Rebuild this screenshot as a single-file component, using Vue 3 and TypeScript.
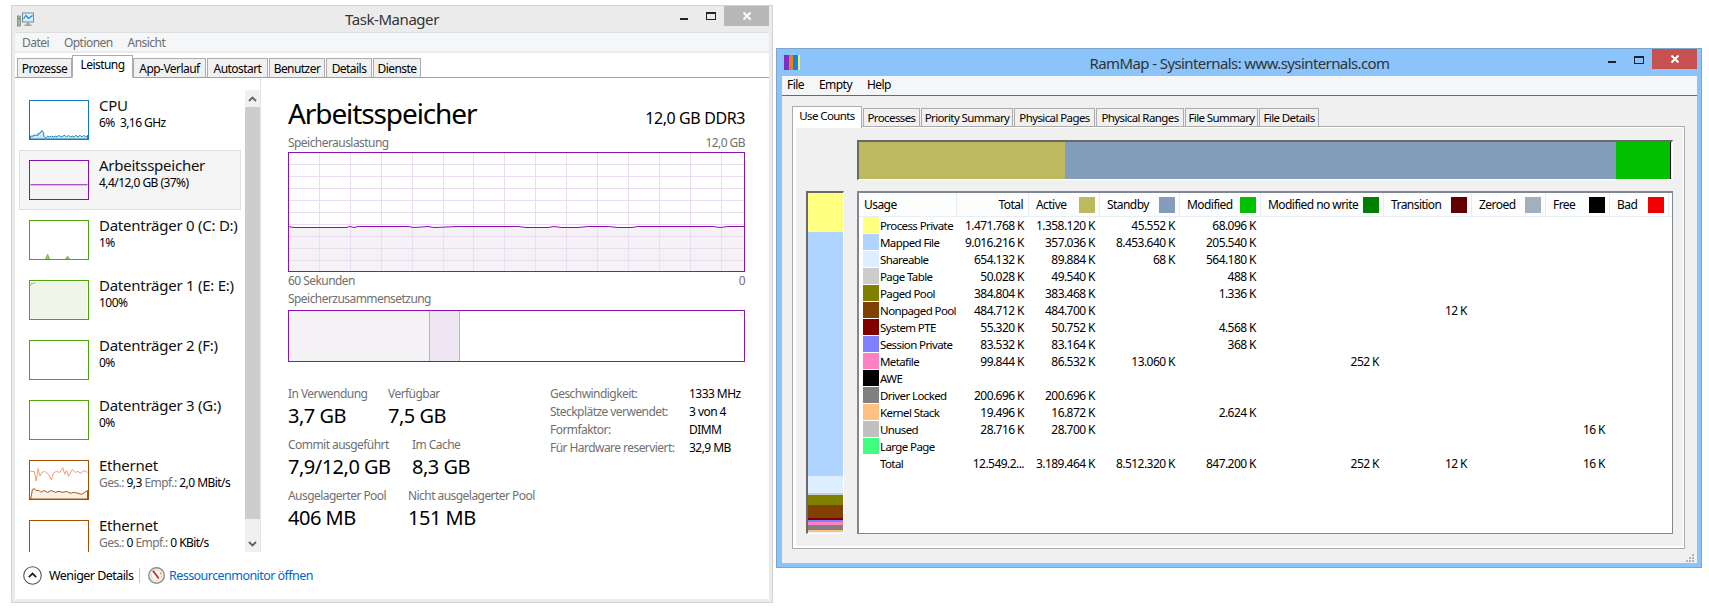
<script setup lang="ts">
type Shape = { d: string, fill?: string, stroke?: string }
type Perf = { title: string, sub: { t: string, muted?: boolean }[], color: string, shapes: Shape[] }

const tmMenu = ['Datei', 'Optionen', 'Ansicht']
const tmTabs = [
  { label: 'Prozesse', w: 55 },
  { label: 'Leistung', w: 61, active: true },
  { label: 'App-Verlauf', w: 73 },
  { label: 'Autostart', w: 61 },
  { label: 'Benutzer', w: 56 },
  { label: 'Details', w: 46 },
  { label: 'Dienste', w: 48 }
]

const perf: Perf[] = [
  {
    title: 'CPU',
    sub: [{ t: '6%  3,16 GHz' }],
    color: '#117dbb',
    shapes: [{
      d: 'M0 40V37H3V36H8V34H10L12 31L14 34V37L16 39L18 37L20 38L22 37L24 38L26 37L28 38L30 36L32 38L34 37L36 36L38 38L40 36L42 38L44 37L46 38L48 36L50 38L52 36L54 38L56 36L58 38L60 36V40Z',
      fill: '#d3e6f1',
      stroke: '#117dbb'
    }]
  },
  {
    title: 'Arbeitsspeicher',
    sub: [{ t: '4,4/12,0 GB (37%)' }],
    color: '#8b12ae',
    shapes: [{ d: 'M0 25H60V40H0Z', fill: '#f4f2f4' }, { d: 'M0 25H60', stroke: '#8b12ae' }]
  },
  {
    title: 'Datenträger 0 (C: D:)',
    sub: [{ t: '1%' }],
    color: '#4da60c',
    shapes: [{ d: 'M16 40L18 35L20 40ZM37 40L39 37L41 40Z', fill: '#a5d284', stroke: '#6db53a' }]
  },
  {
    title: 'Datenträger 1 (E: E:)',
    sub: [{ t: '100%' }],
    color: '#4da60c',
    shapes: [{ d: 'M0 5L1 2L3 3L5 1H60V40H0Z', fill: '#eff6e8' }, { d: 'M0 5L1 2L3 3L5 1', stroke: '#7dbd4e' }]
  },
  { title: 'Datenträger 2 (F:)', sub: [{ t: '0%' }], color: '#4da60c', shapes: [] },
  { title: 'Datenträger 3 (G:)', sub: [{ t: '0%' }], color: '#4da60c', shapes: [] },
  {
    title: 'Ethernet',
    sub: [{ t: 'Ges.: ', muted: true }, { t: '9,3 ' }, { t: 'Empf.: ', muted: true }, { t: '2,0 MBit/s' }],
    color: '#a74f01',
    shapes: [
      { d: 'M1 36L2 30L4 29L6 31H9L11 33L14 31L18 33L22 31L26 33L30 32L34 33L38 32L42 34L46 33L50 34L54 35L57 33L60 31V40H0Z', fill: '#fcf1e8', stroke: '#a74f01' },
      { d: 'M0 11H4L6 21L8 8L10 16L12 12L15 11L19 14L22 20L24 13L27 11L31 12L34 7L36 14L38 10L40 16L44 9L47 12L50 11L53 13L56 10L60 12', stroke: '#ee9a6c' }
    ]
  },
  {
    title: 'Ethernet',
    sub: [{ t: 'Ges.: ', muted: true }, { t: '0 ' }, { t: 'Empf.: ', muted: true }, { t: '0 KBit/s' }],
    color: '#a74f01',
    shapes: []
  }
]

const gridX = [31, 62, 93, 124, 155, 185, 216, 247, 278, 309, 340, 371, 402, 433]
const gridY = [12, 24, 36, 48, 60, 72, 84, 96, 108]
const memLine = 'M0 74.5L6 75.5H58L62 74.5L66 75.5L70 74.5L76 74.5L120 74.5L126 75.5L140 74.5L146 75.5L170 74.5H230L238 75.5H260L266 74.5L274 75.5H290L300 74.5H320L330 75.5H344L350 74.5H425L432 75.5L440 74.5H457'

const statRows = [
  { w: 100, items: [{ label: 'In Verwendung', value: '3,7 GB' }, { label: 'Verfügbar', value: '7,5 GB' }] },
  { w: 124, items: [{ label: 'Commit ausgeführt', value: '7,9/12,0 GB' }, { label: 'Im Cache', value: '8,3 GB' }] },
  { w: 120, items: [{ label: 'Ausgelagerter Pool', value: '406 MB' }, { label: 'Nicht ausgelagerter Pool', value: '151 MB' }] }
]
const specs = [
  ['Geschwindigkeit:', '1333 MHz'],
  ['Steckplätze verwendet:', '3 von 4'],
  ['Formfaktor:', 'DIMM'],
  ['Für Hardware reserviert:', '32,9 MB']
]

const rmMenu = ['File', 'Empty', 'Help']
const rmTabs = [
  { label: 'Processes', w: 57 },
  { label: 'Priority Summary', w: 92 },
  { label: 'Physical Pages', w: 81 },
  { label: 'Physical Ranges', w: 88 },
  { label: 'File Summary', w: 73 },
  { label: 'File Details', w: 60 }
]
const pageBar = [
  { c: '#bdb95e', w: 206 },
  { c: '#839eba', w: 551 },
  { c: '#00c000', w: 54 },
  { c: '#000000', w: 1 }
]
const usageStack = [
  { c: '#ffff80', h: 39 },
  { c: '#aed4ff', h: 244 },
  { c: '#ddeeff', h: 17 },
  { c: '#cccccc', h: 2 },
  { c: '#808000', h: 10 },
  { c: '#804000', h: 13 },
  { c: '#800000', h: 2 },
  { c: '#8080ff', h: 2 },
  { c: '#ff80c0', h: 3 },
  { c: '#808080', h: 5 },
  { c: '#ffc080', h: 2 }
]
const headers = [
  { label: 'Active', c: '#bdb95e' },
  { label: 'Standby', c: '#839eba' },
  { label: 'Modified', c: '#00c000' },
  { label: 'Modified no write', c: '#008000' },
  { label: 'Transition', c: '#600000' },
  { label: 'Zeroed', c: '#a3afbc' },
  { label: 'Free', c: '#000000' },
  { label: 'Bad', c: '#f00000' }
]
const usage = [
  { name: 'Process Private', c: '#ffff80', v: ['1.471.768 K', '1.358.120 K', '45.552 K', '68.096 K'] },
  { name: 'Mapped File', c: '#aed4ff', v: ['9.016.216 K', '357.036 K', '8.453.640 K', '205.540 K'] },
  { name: 'Shareable', c: '#ddeeff', v: ['654.132 K', '89.884 K', '68 K', '564.180 K'] },
  { name: 'Page Table', c: '#cccccc', v: ['50.028 K', '49.540 K', '', '488 K'] },
  { name: 'Paged Pool', c: '#808000', v: ['384.804 K', '383.468 K', '', '1.336 K'] },
  { name: 'Nonpaged Pool', c: '#804000', v: ['484.712 K', '484.700 K', '', '', '', '12 K'] },
  { name: 'System PTE', c: '#800000', v: ['55.320 K', '50.752 K', '', '4.568 K'] },
  { name: 'Session Private', c: '#8080ff', v: ['83.532 K', '83.164 K', '', '368 K'] },
  { name: 'Metafile', c: '#ff80c0', v: ['99.844 K', '86.532 K', '13.060 K', '', '252 K'] },
  { name: 'AWE', c: '#000000', v: [] },
  { name: 'Driver Locked', c: '#808080', v: ['200.696 K', '200.696 K'] },
  { name: 'Kernel Stack', c: '#ffc080', v: ['19.496 K', '16.872 K', '', '2.624 K'] },
  { name: 'Unused', c: '#c0c0c0', v: ['28.716 K', '28.700 K', '', '', '', '', '', '16 K'] },
  { name: 'Large Page', c: '#40ff80', v: [] },
  { name: 'Total', c: 'transparent', v: ['12.549.2...', '3.189.464 K', '8.512.320 K', '847.200 K', '252 K', '12 K', '', '16 K'] }
]
</script>

<template>
  <div class="desktop">
    <!-- Task-Manager -->
    <section class="win tm">
      <header class="titlebar">
        <svg class="tm-icon" width="17" height="15" viewBox="0 0 17 15">
          <rect x="0.5" y="4" width="3" height="10" fill="#a9b5a8" stroke="#6f7f70" stroke-width="0.7" />
          <rect x="1" y="6" width="2" height="1.5" fill="#46b046" />
          <rect x="5.5" y="1" width="11" height="9" fill="#d5ecfa" stroke="#7d8c99" />
          <path d="M6.5 7L9 3.5L11.5 6.5L15.5 3.5" fill="none" stroke="#2a86cf" stroke-width="1.2" />
          <path d="M9.5 10.5H12.5V12.5H14.5V14H7.5V12.5H9.5Z" fill="#9aa5ad" />
        </svg>
        <span class="title">Task-Manager</span>
        <span class="caption">
          <i class="min"></i>
          <i class="max"></i>
          <b class="close close-idle">
            <svg width="10" height="10" viewBox="0 0 10 10"><path d="M1.5 1.5L8.5 8.5M8.5 1.5L1.5 8.5" stroke="#fff" stroke-width="2" /></svg>
          </b>
        </span>
      </header>
      <nav class="tm-menu"><span v-for="m in tmMenu" :key="m">{{ m }}</span></nav>
      <div class="client">
        <div class="tm-tabs">
          <span
            v-for="t in tmTabs"
            :key="t.label"
            class="tm-tab"
            :class="{ active: t.active }"
            :style="{ width: t.w + 'px' }"
          >{{ t.label }}</span>
        </div>

        <div class="tm-body">
          <aside class="side">
            <div class="side-list">
              <div v-for="(p, i) in perf" :key="i" class="perf" :class="{ selected: i === 1 }">
                <svg class="thumb" width="60" height="40" viewBox="0 0 60 40" :style="{ borderColor: p.color }">
                  <path
                    v-for="(s, j) in p.shapes"
                    :key="j"
                    :d="s.d"
                    :fill="s.fill || 'none'"
                    :stroke="s.stroke || 'none'"
                    stroke-width="1"
                  />
                </svg>
                <div class="perf-text">
                  <div class="perf-title">{{ p.title }}</div>
                  <div class="perf-sub"><span v-for="(s, j) in p.sub" :key="j" :class="{ muted: s.muted }">{{ s.t }}</span></div>
                </div>
              </div>
            </div>
            <div class="scrollbar">
              <span class="arrow">
                <svg width="9" height="6" viewBox="0 0 9 6"><path d="M1 5L4.5 1.5L8 5" fill="none" stroke="#606060" stroke-width="1.8" /></svg>
              </span>
              <span class="sb-thumb"></span>
              <span class="arrow">
                <svg width="9" height="6" viewBox="0 0 9 6"><path d="M1 1L4.5 4.5L8 1" fill="none" stroke="#606060" stroke-width="1.8" /></svg>
              </span>
            </div>
          </aside>

          <main class="detail">
            <div class="head">
              <h1>Arbeitsspeicher</h1>
              <span class="head-size">12,0 GB DDR3</span>
            </div>
            <div class="caption-row"><span>Speicherauslastung</span><span>12,0 GB</span></div>
            <svg class="graph" width="457" height="120" viewBox="0 0 457 120">
              <rect x="0" y="75" width="457" height="45" fill="#f4f2f4" />
              <path v-for="x in gridX" :key="x" :d="`M${x + 0.5} 0V120`" stroke="#ecdcf2" />
              <path v-for="y in gridY" :key="y" :d="`M0 ${y + 0.5}H457`" stroke="#ecdcf2" />
              <path :d="memLine" fill="none" stroke="#8b12ae" />
              <rect x="0.5" y="0.5" width="456" height="119" fill="none" stroke="#8b12ae" />
            </svg>
            <div class="caption-row after"><span>60 Sekunden</span><span>0</span></div>
            <div class="caption-row comp-label"><span>Speicherzusammensetzung</span></div>
            <div class="comp">
              <span class="comp-used"></span>
              <span class="comp-mod"></span>
            </div>
            <div class="stats">
              <div class="stats-left">
                <div v-for="(r, i) in statRows" :key="i" class="stat-row">
                  <div v-for="(s, j) in r.items" :key="s.label" class="stat" :style="j === 0 ? { width: r.w + 'px' } : undefined">
                    <div class="stat-label">{{ s.label }}</div>
                    <div class="stat-value">{{ s.value }}</div>
                  </div>
                </div>
              </div>
              <div class="specs">
                <div v-for="s in specs" :key="s[0]" class="spec">
                  <span class="spec-label">{{ s[0] }}</span><span>{{ s[1] }}</span>
                </div>
              </div>
            </div>
          </main>
        </div>

        <footer class="tm-foot">
          <svg width="19" height="19" viewBox="0 0 19 19">
            <circle cx="9.5" cy="9.5" r="8.8" fill="#fff" stroke="#555" stroke-width="1.1" />
            <path d="M5.8 11.2L9.5 7.6L13.2 11.2" fill="none" stroke="#222" stroke-width="1.8" />
          </svg>
          <span class="less">Weniger Details</span>
          <span class="foot-sep"></span>
          <svg width="17" height="17" viewBox="0 0 17 17">
            <circle cx="8.5" cy="8.5" r="7.8" fill="#f3efe9" stroke="#8d8d8d" stroke-width="1.4" />
            <circle cx="8.5" cy="8.5" r="5.2" fill="#fff" stroke="#c9c3ba" stroke-width="0.6" />
            <path d="M5 3.8L10.8 11.5" stroke="#c8252a" stroke-width="1.8" />
            <path d="M12.5 5.5V7.5" stroke="#d79a36" stroke-width="1.2" />
          </svg>
          <span class="link">Ressourcenmonitor öffnen</span>
        </footer>
      </div>
    </section>

    <!-- RamMap -->
    <section class="win rm">
      <header class="titlebar rm-title">
        <svg class="rm-icon" width="16" height="15" viewBox="0 0 16 15">
          <rect x="0" y="0" width="5" height="15" fill="#7b2fc4" />
          <rect x="5" y="0" width="4" height="15" fill="#f07d1a" />
          <rect x="9" y="0" width="5" height="15" fill="#0b84e6" />
          <rect x="14" y="0" width="2" height="15" fill="#f4f24a" />
        </svg>
        <span class="title">RamMap - Sysinternals: www.sysinternals.com</span>
        <span class="caption">
          <i class="min"></i>
          <i class="max"></i>
          <b class="close close-red">
            <svg width="10" height="10" viewBox="0 0 10 10"><path d="M1.5 1.5L8.5 8.5M8.5 1.5L1.5 8.5" stroke="#fff" stroke-width="2" /></svg>
          </b>
        </span>
      </header>
      <nav class="rm-menu"><span v-for="m in rmMenu" :key="m">{{ m }}</span></nav>
      <div class="rm-body">
        <div class="rm-tabs">
          <span class="rm-tab active">Use Counts</span>
          <span v-for="t in rmTabs" :key="t.label" class="rm-tab" :style="{ width: t.w + 'px' }">{{ t.label }}</span>
        </div>
        <div class="rm-page">
          <div class="rm-inner">
            <div class="spacer"></div>
            <div class="page-bar">
              <span v-for="s in pageBar" :key="s.c" :style="{ background: s.c, width: s.w + 'px' }"></span>
            </div>
            <div class="stack">
              <span v-for="s in usageStack" :key="s.c" :style="{ background: s.c, height: s.h + 'px' }"></span>
            </div>
            <div class="table">
              <div class="t-row t-head">
                <div class="th">Usage</div>
                <div class="th right">Total</div>
                <div v-for="h in headers" :key="h.label" class="th">
                  <span>{{ h.label }}</span><i class="sw" :style="{ background: h.c }"></i>
                </div>
              </div>
              <div v-for="r in usage" :key="r.name" class="t-row">
                <div class="td-name"><i class="sw" :style="{ background: r.c }"></i><span>{{ r.name }}</span></div>
                <div v-for="n in 9" :key="n" class="td">{{ r.v[n - 1] }}</div>
              </div>
            </div>
          </div>
        </div>
        <svg class="grip" width="9" height="9" viewBox="0 0 9 9" fill="#b4b4b4">
          <rect x="7" y="1" width="2" height="2" />
          <rect x="4" y="4" width="2" height="2" /><rect x="7" y="4" width="2" height="2" />
          <rect x="1" y="7" width="2" height="2" /><rect x="4" y="7" width="2" height="2" /><rect x="7" y="7" width="2" height="2" />
        </svg>
      </div>
    </section>
  </div>
</template>

<style scoped>
.desktop {
  position: relative;
  width: 1709px;
  height: 613px;
  overflow: hidden;
  background: #fff;
  font-family: "Noto Sans", "Open Sans", sans-serif;
  font-size: 12px;
  color: #000;
  letter-spacing: -0.55px;
}
.win {
  position: absolute;
  box-sizing: border-box;
  display: flex;
  flex-direction: column;
}
.tm {
  left: 11px;
  top: 5px;
  width: 762px;
  height: 598px;
  border: 1px solid #d2d2d2;
  background: #ebebeb;
  padding: 0 3px 3px;
}
.titlebar {
  position: relative;
  flex: none;
  height: 26px;
  display: flex;
  align-items: center;
  justify-content: center;
}
.title {
  font-size: 15px;
  color: #333;
  letter-spacing: -0.45px;
}
.tm-icon {
  position: absolute;
  left: 2px;
  top: 6px;
}
.caption {
  position: absolute;
  right: 0;
  top: 0;
  display: flex;
}
.min {
  width: 8px;
  height: 2px;
  background: #222;
  margin-top: 12px;
  margin-right: 18px;
}
.max {
  box-sizing: border-box;
  width: 10px;
  height: 8px;
  border: 1px solid #222;
  border-top-width: 2px;
  margin-top: 6px;
  margin-right: 8px;
}
.close {
  width: 45px;
  height: 20px;
  display: flex;
  align-items: center;
  justify-content: center;
}
.close-idle {
  background: #b8b8b8;
}
.close-red {
  background: #c75050;
}
.tm-menu {
  flex: none;
  height: 18px;
  margin-bottom: 2px;
  background: #f5f6f7;
  border-top: 1px solid #dedede;
  display: flex;
  align-items: center;
  gap: 15px;
  padding-left: 7px;
  color: #6d6d6d;
}
.client {
  flex: 1;
  background: #fff;
  display: flex;
  flex-direction: column;
  min-height: 0;
}
.tm-tabs {
  flex: none;
  box-sizing: border-box;
  height: 25px;
  display: flex;
  align-items: flex-end;
  gap: 1px;
  padding-left: 2px;
  border-bottom: 1px solid #a0a0a0;
}
.tm-tab {
  box-sizing: border-box;
  height: 20px;
  margin-bottom: -1px;
  background: #f0f0f0;
  border: 1px solid #acacac;
  border-bottom: 1px solid #a0a0a0;
  text-align: center;
  line-height: 19px;
}
.tm-tab.active {
  height: 23px;
  margin: 0 -1px -1px;
  position: relative;
  background: #fff;
  border-bottom-color: #fff;
  line-height: 18px;
}
.tm-body {
  flex: none;
  height: 474px;
  display: flex;
  overflow: hidden;
}
.side {
  flex: none;
  width: 246px;
  display: flex;
  padding-top: 12px;
  box-sizing: border-box;
  border-right: 1px solid #e4e4e4;
}
.side-list {
  flex: 1;
  padding-left: 4px;
  overflow: hidden;
}
.perf {
  box-sizing: border-box;
  width: 222px;
  height: 60px;
  padding: 9px 0 0 9px;
  display: flex;
  gap: 10px;
  border: 1px solid transparent;
}
.perf.selected {
  background: #f5f5f5;
  border-color: #dfdfdf;
}
.thumb {
  flex: none;
  box-sizing: border-box;
  border: 1px solid;
  width: 60px;
  height: 40px;
}
.perf-text {
  white-space: nowrap;
  margin-top: -5px;
}
.perf-title {
  font-size: 15px;
  line-height: 20px;
  color: #111;
  letter-spacing: -0.25px;
}
.perf-sub {
  line-height: 15px;
  white-space: pre;
}
.muted {
  color: #707070;
}
.scrollbar {
  flex: none;
  width: 15px;
  display: flex;
  flex-direction: column;
}
.arrow {
  height: 17px;
  flex: none;
  background: #f0f0f0;
  display: flex;
  align-items: center;
  justify-content: center;
}
.sb-thumb {
  flex: 1;
  background: #cdcdcd;
}
.scrollbar .arrow:last-child {
  height: 33px;
  align-items: flex-end;
  padding-bottom: 5px;
  box-sizing: border-box;
}
.detail {
  flex: 1;
  min-width: 0;
  padding: 0 24px 0 27px;
}
.head {
  height: 57px;
  display: flex;
  align-items: baseline;
  justify-content: space-between;
  padding-top: 16px;
  box-sizing: border-box;
}
.head h1 {
  margin: 0;
  font-size: 28px;
  font-weight: 400;
  line-height: 38px;
  letter-spacing: -1.1px;
}
.head-size {
  font-size: 16px;
  letter-spacing: -0.4px;
}
.caption-row {
  display: flex;
  justify-content: space-between;
  height: 17px;
  line-height: 16px;
  color: #707070;
}
.caption-row.after {
  height: 17px;
  line-height: 17px;
}
.caption-row.comp-label {
  margin-top: 2px;
  height: 19px;
}
.graph {
  display: block;
}
.comp {
  box-sizing: border-box;
  height: 52px;
  border: 1px solid #8b12ae;
  display: flex;
}
.comp-used {
  width: 140px;
  background: #f4f2f4;
}
.comp-mod {
  box-sizing: border-box;
  width: 31px;
  background: #eee6f2;
  border: 1px solid #c9a8d8;
  border-width: 0 1px;
}
.stats {
  display: flex;
  margin-top: 24px;
}
.stats-left {
  flex: none;
  width: 262px;
}
.stat-row {
  display: flex;
  height: 51px;
  white-space: nowrap;
}
.stat {
  flex: none;
}
.stat-label {
  line-height: 16px;
  color: #707070;
}
.stat-value {
  margin-top: 1px;
  font-size: 20px;
  line-height: 26px;
  letter-spacing: -0.5px;
}
.specs {
  margin-top: -1px;
}
.spec {
  display: flex;
  height: 18px;
  line-height: 18px;
  white-space: nowrap;
}
.spec-label {
  flex: none;
  width: 139px;
  color: #707070;
}
.tm-foot {
  flex: 1;
  display: flex;
  align-items: center;
  padding: 0 0 1px 8px;
  font-size: 12.5px;
}
.less {
  margin-left: 7px;
  width: 90px;
  white-space: nowrap;
}
.foot-sep {
  width: 1px;
  height: 15px;
  background: #c8c8c8;
  margin-right: 8px;
}
.link {
  margin-left: 4px;
  color: #0066cc;
  white-space: nowrap;
}
.rm {
  left: 776px;
  top: 48px;
  width: 926px;
  height: 520px;
  border: 1px solid #7ea5cc;
  background: #8ac4fa;
  padding: 0 4px 4px 5px;
}
.rm-title {
  height: 27px;
}
.rm-icon {
  position: absolute;
  left: 2px;
  top: 6px;
}
.rm .title {
  letter-spacing: -0.6px;
}
.rm .min {
  margin-top: 12px;
}
.rm .max {
  margin-top: 7px;
}
.rm-menu {
  flex: none;
  height: 16px;
  background: #f5f6f7;
  display: flex;
  align-items: center;
  gap: 15px;
  padding-left: 5px;
  box-sizing: content-box;
  padding-bottom: 3px;
  border-bottom: 1px solid #696969;
}
.rm-body {
  position: relative;
  flex: 1;
  min-height: 0;
  background: #f0f0f0;
  padding: 10px 12px 14px 10px;
  display: flex;
  flex-direction: column;
}
.rm-tabs {
  flex: none;
  height: 20px;
  display: flex;
  align-items: flex-end;
  gap: 1px;
  position: relative;
  z-index: 1;
}
.rm-tab {
  box-sizing: border-box;
  height: 18px;
  margin-bottom: 0;
  background: #f0f0f0;
  border: 1px solid #acacac;
  border-bottom: none;
  text-align: center;
  line-height: 17px;
  font-size: 11.5px;
  letter-spacing: -0.6px;
}
.rm-tab.active {
  width: 70px;
  height: 22px;
  margin-bottom: -2px;
  background: #fff;
  line-height: 18px;
}
.rm-page {
  flex: 1;
  min-height: 0;
  border: 1px solid #acacac;
}
.rm-inner {
  box-sizing: border-box;
  height: 100%;
  background: #f0f0f0;
  border: solid #fff;
  border-width: 1px 1px 2px 3px;
  padding: 12px 0 0 10px;
  display: grid;
  grid-template-columns: 38px 816px;
  grid-template-rows: 40px 343px;
  column-gap: 13px;
  row-gap: 11px;
}
.page-bar {
  box-sizing: border-box;
  border: solid #fff;
  border-width: 0 1px 1px 0;
  border-top: 2px solid #696969;
  border-left: 2px solid #696969;
  display: flex;
}
.stack {
  box-sizing: border-box;
  border: solid #fff;
  border-width: 2px 1px 1px 2px;
  border-top-color: #696969;
  border-left-color: #696969;
  display: flex;
  flex-direction: column;
}
.stack span {
  flex: none;
}
.table {
  box-sizing: border-box;
  background: #fff;
  border: 1px solid #7f8790;
  border-width: 2px 1px 1px 2px;
  font-size: 12px;
}
.t-row {
  display: grid;
  grid-template-columns: 98px 72px 71px 80px 81px 123px 88px 74px 64px 59px;
  height: 17px;
  line-height: 18px;
  white-space: nowrap;
}
.t-head {
  height: 24px;
  background: #fdfdfd;
  border-bottom: 1px solid #e8eef6;
  box-sizing: border-box;
}
.th {
  box-sizing: border-box;
  display: flex;
  align-items: center;
  justify-content: space-between;
  padding: 0 4px 0 7px;
  border-right: 1px solid #e5ecf5;
}
.th:first-child {
  padding-left: 5px;
}
.th.right {
  justify-content: flex-end;
  padding-right: 5px;
}
.sw {
  flex: none;
  width: 16px;
  height: 16px;
  display: block;
}
.td-name {
  display: flex;
  gap: 1px;
  padding-left: 4px;
  min-width: 0;
  font-size: 11.5px;
  letter-spacing: -0.6px;
}
.td {
  text-align: right;
  padding-right: 5px;
}
.grip {
  position: absolute;
  right: 3px;
  bottom: 1px;
}
</style>

<style>
html, body {
  background: #fff;
}
</style>
